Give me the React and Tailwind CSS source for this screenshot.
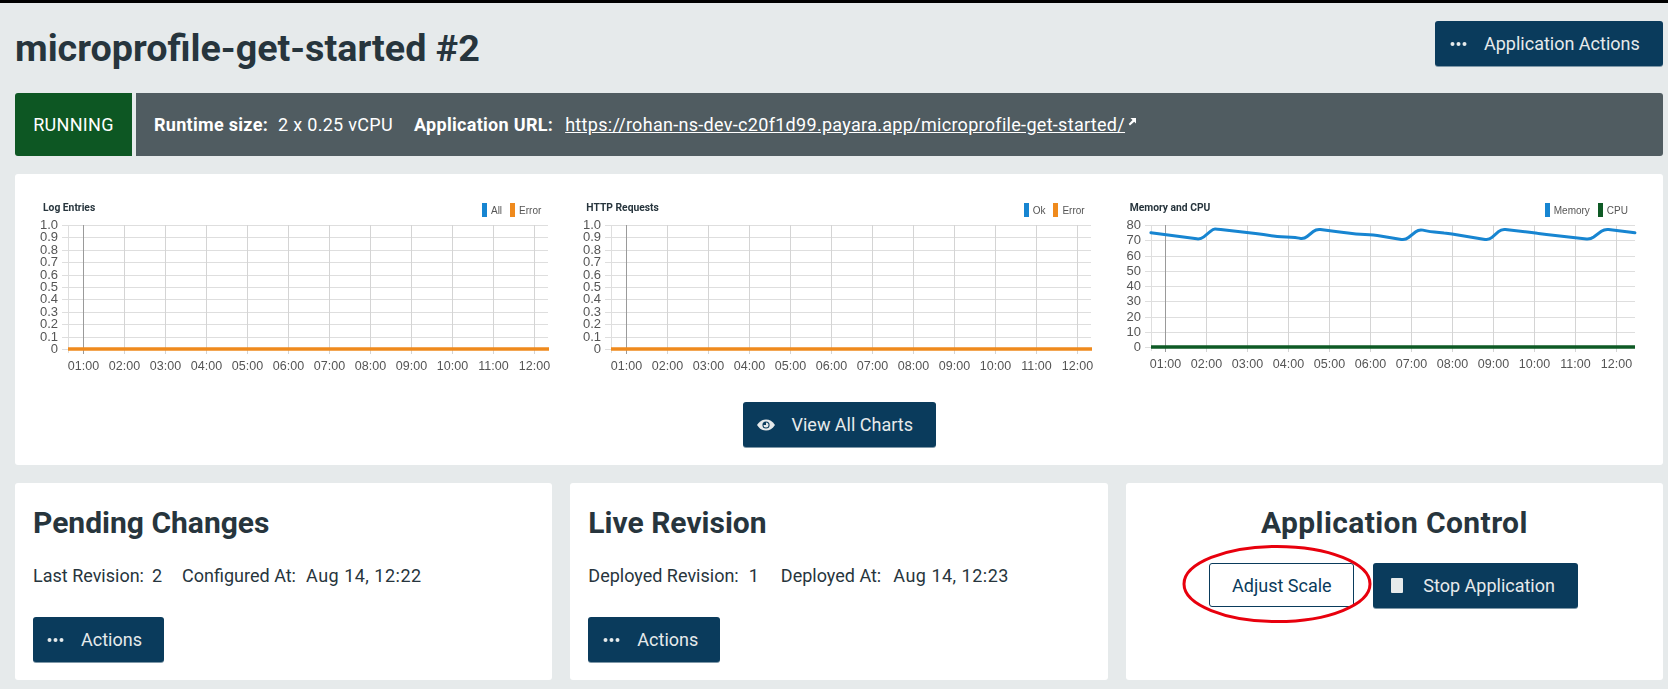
import React from "react";

const hours = ["01:00","02:00","03:00","04:00","05:00","06:00","07:00","08:00","09:00","10:00","11:00","12:00"];

// points read off the picture, in svg coordinates of the chart
const memoryPoints = [[115,158],[255,178],[290,147],[300,147],[420,162],[470,170],[520,172],[545,177],[580,147],[640,155],[680,161],[740,165],[830,180],[868,148],[900,155],[950,160],[1065,180],[1100,147],[1190,158],[1215,162],[1350,178],[1390,147],[1475,158]]
  .map(([x, y]) => [x / 2.81 - 1, y / 3 - 40]);

// rounds each corner over a few pixels, the line in the picture has no sharp dips
const smoothPath = (pts) => {
  const toward = (a, b, r) => {
    const len = Math.hypot(b[0] - a[0], b[1] - a[1]);
    const t = Math.min(r / len, 0.5);
    return [a[0] + (b[0] - a[0]) * t, a[1] + (b[1] - a[1]) * t];
  };
  let d = `M${pts[0][0].toFixed(1)} ${pts[0][1].toFixed(1)}`;
  for (let i = 1; i < pts.length - 1; i++) {
    const from = toward(pts[i], pts[i - 1], 4);
    const to = toward(pts[i], pts[i + 1], 4);
    d += `L${from[0].toFixed(1)} ${from[1].toFixed(1)}Q${pts[i][0].toFixed(1)} ${pts[i][1].toFixed(1)} ${to[0].toFixed(1)} ${to[1].toFixed(1)}`;
  }
  const last = pts[pts.length - 1];
  return d + `L${last[0].toFixed(1)} ${last[1].toFixed(1)}`;
};

const Dots = () => (
  <svg width="17" height="6" viewBox="0 0 17 6" className="shrink-0">
    <circle cx="2.5" cy="3" r="2" fill="#e6eaeb" />
    <circle cx="8.5" cy="3" r="2" fill="#e6eaeb" />
    <circle cx="14.5" cy="3" r="2" fill="#e6eaeb" />
  </svg>
);

const EyeIcon = () => (
  <svg width="18" height="12" viewBox="0 0 18 12" className="shrink-0">
    <path d="M0 6C2.5 2 5.5 0.5 9 0.5S15.500 2 18 6C15.500 10 12.500 11.500 9 11.500S2.500 10 0 6Z" fill="#e6eaeb" />
    <circle cx="9" cy="6" r="3.600" fill="#0a3b5c" />
    <path d="M9 3.500A2.500 2.500 0 1 1 6.500 6L9 6Z" fill="#e6eaeb" />
  </svg>
);

const Button = ({ icon, label, className }) => (
  <button className={`flex items-center rounded-[3px] bg-[#0a3b5c] text-[#e6eaeb] shadow-[0_1px_0_#7f98a8] h-[45px] ${className}`}>
    {icon}
    <span>{label}</span>
  </button>
);

const Chart = ({ title, legend, yLabels, plotLeft, zeroY, children }) => {
  const n = yLabels.length - 1;
  const step = (zeroY - 5) / n;
  const firstX = plotLeft === 40 ? 54.5 : 59.5;
  const xStep = 41;
  return (
    <div className="pt-[24px] blur-[0.3px]">
      <div className="flex justify-between items-start h-[14px] pl-[19px] pr-[26px]">
        <span className="text-[10.3px] font-bold leading-[20px] text-[#27353d]">{title}</span>
        <div className="flex items-center h-[14px] mt-[5px] text-[10px] text-[#555] font-['Liberation_Sans',sans-serif]">
          {legend.map(([name, color]) => (
            <div key={name} className="flex items-center gap-[4px] ml-[8px]">
              <span className={`w-[5px] h-[14px] ${color}`}></span>
              <span>{name}</span>
            </div>
          ))}
        </div>
      </div>
      <svg width="543" height="168" viewBox="0 -8 543 168" className="block">
        {yLabels.map((label, i) => {
          const y = Math.round(zeroY - i * step) + 0.5;
          return (
            <g key={label}>
              <line x1={plotLeft - 6} x2="524" y1={y} y2={y} stroke="#dedede" strokeWidth="1" />
              <text x={plotLeft - 10} y={y + 3.5} textAnchor="end" fontSize="13" fill="#555" fontFamily="Liberation Sans, sans-serif">{label}</text>
            </g>
          );
        })}
        <line x1={plotLeft + 0.5} x2={plotLeft + 0.5} y1="5" y2={zeroY + 4} stroke="#dedede" />
        {hours.map((h, i) => {
          const x = firstX + i * xStep;
          return (
            <g key={h}>
              <line x1={x} x2={x} y1="5" y2={zeroY + 5} stroke={i === 0 ? "#9a9a9a" : "#d4d4d4"} />
              <text x={x} y={zeroY + 21} textAnchor="middle" fontSize="12.5" fill="#555" fontFamily="Liberation Sans, sans-serif">{h}</text>
            </g>
          );
        })}
        {children}
      </svg>
    </div>
  );
};

const Card = ({ children, className }) => (
  <div className={`bg-white rounded-[3px] h-[197px] ${className}`}>{children}</div>
);

export default function App() {
  return (
    <div className="min-h-[689px] bg-[#e6eaeb] font-['Roboto',sans-serif] text-[#27353d] text-[18px]">
      <div className="h-[3px] bg-black"></div>
      <div className="pl-[15px] pr-[5px]">
        <div className="flex items-start justify-between pt-[18px] pb-[22px]">
          <h1 className="text-[37.7px] font-bold leading-[45px] mt-[5px]">microprofile-get-started #2</h1>
          <Button icon={<Dots />} label="Application Actions" className="w-[228px] pl-[15px] gap-[17px]" />
        </div>

        <div className="flex h-[63px] gap-[4px] text-white tracking-[0.3px]">
          <div className="w-[117px] flex items-center justify-center bg-[#0d5723] rounded-l-[3px]">RUNNING</div>
          <div className="flex-1 flex items-center pl-[18px] bg-[#505c61] rounded-r-[3px]">
            <span className="font-bold">Runtime size:</span>
            <span className="ml-[10px]">2 x 0.25 vCPU</span>
            <span className="font-bold ml-[21px]">Application URL:</span>
            <a className="underline ml-[12px]" href="#">https://rohan-ns-dev-c20f1d99.payara.app/microprofile-get-started/</a>
            <svg width="9" height="9" viewBox="0 0 9 9" className="ml-[3px] mb-[6px]">
              <path d="M2.500 1H8V6.500L6.200 4.700L2 8.500L0.700 7L4.500 3Z" fill="white" />
            </svg>
          </div>
        </div>

        <div className="mt-[18px] h-[291px] bg-white rounded-[3px] px-[9px]">
          <div className="grid grid-cols-3">
            <Chart title="Log Entries" legend={[["All", "bg-[#1785d1]"], ["Error", "bg-[#ef8a1d]"]]} plotLeft={44} zeroY={129}
              yLabels={["0","0.1","0.2","0.3","0.4","0.5","0.6","0.7","0.8","0.9","1.0"]}>
              <line x1="44" x2="525" y1="129" y2="129" stroke="#ef8a1d" strokeWidth="3.5" />
            </Chart>
            <Chart title="HTTP Requests" legend={[["Ok", "bg-[#1785d1]"], ["Error", "bg-[#ef8a1d]"]]} plotLeft={44} zeroY={129}
              yLabels={["0","0.1","0.2","0.3","0.4","0.5","0.6","0.7","0.8","0.9","1.0"]}>
              <line x1="44" x2="525" y1="129" y2="129" stroke="#ef8a1d" strokeWidth="3.5" />
            </Chart>
            <Chart title="Memory and CPU" legend={[["Memory", "bg-[#1785d1]"], ["CPU", "bg-[#0e5a25]"]]} plotLeft={40} zeroY={127}
              yLabels={["0","10","20","30","40","50","60","70","80"]}>
              <path d={smoothPath(memoryPoints)} fill="none" stroke="#1785d1" strokeWidth="3" strokeLinecap="round" />
              <line x1="40" x2="524" y1="127" y2="127" stroke="#0e5a25" strokeWidth="3.5" />
            </Chart>
          </div>
          <div className="flex justify-center mt-[22px]">
            <Button icon={<EyeIcon />} label="View All Charts" className="w-[193px] pl-[14px] gap-[17px]" />
          </div>
        </div>

        <div className="mt-[18px] grid grid-cols-3 gap-[18px]">
          <Card className="p-[18px]">
            <h2 className="text-[30px] font-bold leading-[44px]">Pending Changes</h2>
            <p className="mt-[19px] leading-[24px]">
              <span>Last Revision:</span>
              <span className="ml-[8px]">2</span>
              <span className="ml-[20px]">Configured At:</span>
              <span className="ml-[10px] tracking-[0.5px]">Aug 14, 12:22</span>
            </p>
            <Button icon={<Dots />} label="Actions" className="mt-[29px] w-[131px] pl-[14px] gap-[17px]" />
          </Card>
          <Card className="p-[18px]">
            <h2 className="text-[30px] font-bold leading-[44px]">Live Revision</h2>
            <p className="mt-[19px] leading-[24px]">
              <span>Deployed Revision:</span>
              <span className="ml-[10px]">1</span>
              <span className="ml-[22px]">Deployed At:</span>
              <span className="ml-[12px] tracking-[0.5px]">Aug 14, 12:23</span>
            </p>
            <Button icon={<Dots />} label="Actions" className="mt-[29px] w-[132px] pl-[15px] gap-[17px]" />
          </Card>
          <Card className="pt-[18px] flex flex-col items-center">
            <h2 className="text-[30px] font-bold leading-[44px] tracking-[0.4px]">Application Control</h2>
            <div className="relative flex mt-[18px] gap-[19px] mr-[1px]">
              <button className="w-[145px] h-[44px] rounded-[3px] border border-[#0a3b5c] text-[#0a3b5c] bg-white">Adjust Scale</button>
              <Button icon={<span className="w-[12px] h-[15px] bg-[#e6eaeb] rounded-[1px]"></span>} label="Stop Application" className="w-[205px] pl-[18px] gap-[20px]" />
              <svg width="190" height="80" viewBox="0 0 190 80" className="absolute left-[-27px] top-[-19px] pointer-events-none">
                <ellipse cx="95" cy="40" rx="93" ry="37.500" fill="none" stroke="#e8000d" strokeWidth="3" />
              </svg>
            </div>
          </Card>
        </div>
      </div>
    </div>
  );
}
